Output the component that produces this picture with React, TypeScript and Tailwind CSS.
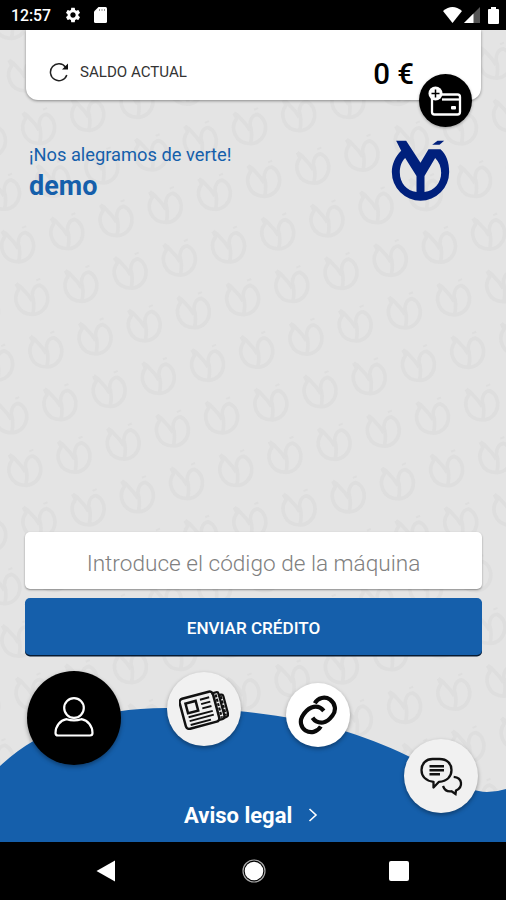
import type { ReactNode } from "react"
import { MdSettings } from "react-icons/md"

const LOGO_RING =
  "M15 2H45L88 68L112 28H148C165 42 174 68 174 96A86 86 0 0 1 2 96C2 72 12 50 30 32L15 2ZM42 54C30 66 26 82 26 98C26 128 46 152 76 156V108ZM132 54L100 108V156C130 152 150 128 150 98C150 82 144 66 132 54Z"
const LOGO_ACCENT = "M123 14L139 2H159L145 14Z"

function Logo({ className }: { className?: string }) {
  return (
    <svg viewBox="0 0 176 183" className={className} fill="currentColor" aria-hidden="true">
      <path d={LOGO_RING} fillRule="evenodd" />
      <path d={LOGO_ACCENT} />
    </svg>
  )
}

// slanted grid of faint logos behind the whole screen
function Watermark() {
  const marks: { x: number; y: number }[] = []
  for (let i = -6; i < 14; i++) {
    for (let j = -9; j < 13; j++) {
      const x = 45.7 + i * 49.2 + j * 14.1
      const y = 321.7 - i * 13.1 + j * 52.6
      if (x > -30 && x < 536 && y > -30 && y < 830) marks.push({ x, y })
    }
  }

  return (
    <svg viewBox="0 0 506 812" className="absolute inset-0 h-[812px] w-[506px]" aria-hidden="true">
      <g fill="none" stroke="#dedede" strokeWidth="11" strokeLinejoin="round">
        {marks.map(({ x, y }) => (
          <g key={`${x}-${y}`} transform={`translate(${x} ${y}) scale(0.333)`}>
            <path d="M-46 -46L-38 -30C-58 -4 -46 46 4 46C56 42 62 -26 24 -42C8 -40 2 -24 2 -10C8 6 8 22 4 44" />
            <path d="M-46 -46L-34 -38L-10 -12L2 6" />
            <path d="M14 -56L26 -61" strokeWidth="6" />
          </g>
        ))}
      </g>
    </svg>
  )
}

function StatusBar() {
  return (
    <div className="flex h-[30px] items-center justify-between bg-black pl-[11px] pr-[7px] text-white">
      <div className="flex items-center">
        <span className="w-[53px] pt-[1px] text-[15.800px] font-medium leading-none">12:57</span>
        <MdSettings className="size-[18px]" />
        <svg viewBox="0 0 13 16" className="ml-[12px] h-[16px] w-[13px]">
          <path d="M4.5 0H11.5Q13 0 13 1.5V14.5Q13 16 11.5 16H1.5Q0 16 0 14.5V4.5Z" fill="white" />
          <path d="M5.5 2V4M8 2V4M10.5 2V4" stroke="#999" strokeWidth="1" />
        </svg>
      </div>
      <div className="flex items-center">
        <svg viewBox="0 0 19 16" className="h-[16px] w-[19px]">
          <path d="M0 4Q9.500-4 19 4L9.500 16Z" fill="white" />
        </svg>
        <svg viewBox="0 0 16 16" className="ml-[2px] h-[16px] w-[16px]">
          <path d="M16 0V16H0Z" fill="#555" />
          <path d="M9.500 6.500V16H0Z" fill="white" />
        </svg>
        <svg viewBox="0 0 11 17" className="ml-[8px] h-[17px] w-[11px]">
          <path d="M3 0H8V2H10Q11 2 11 3V16Q11 17 10 17H1Q0 17 0 16V3Q0 2 1 2H3Z" fill="white" />
        </svg>
      </div>
    </div>
  )
}

function BalanceCard() {
  return (
    <section className="relative ml-[26px] mr-[25px] flex h-[70px] items-start rounded-b-[12px] bg-white pl-[22px] pt-[31px] shadow-[0_1px_3px_rgba(0,0,0,0.4)]">
      <svg viewBox="0 0 20 20" className="ml-[1px] mt-[1px] size-[20px]" fill="none" stroke="#222" strokeWidth="1.5">
        <path d="M17.800 13A8.400 8.400 0 1 1 16.600 5.200" />
        <path d="M19 1.500V7.500H13Z" fill="#111" stroke="none" />
      </svg>
      <span className="ml-[11px] mt-[1px] text-[15.100px] leading-[20px] text-[#333]">SALDO ACTUAL</span>
      <span className="ml-auto mr-[67px] text-[29.500px] font-medium leading-[26px] text-black">0 €</span>
      <button
        type="button"
        aria-label="Recargar"
        className="absolute right-[9px] top-[44px] flex size-[53px] items-center justify-center rounded-full bg-black shadow-[0_1px_3px_rgba(0,0,0,0.3)]"
      >
        <svg viewBox="0 0 36 30" className="mr-[2px] h-[30px] w-[36px]" fill="none">
          <path d="M14 8.500H30.500Q33 8.500 33 11V26Q33 28.500 30.500 28.500H7.500Q5 28.500 5 26V13" stroke="white" strokeWidth="2.300" />
          <path d="M15 13.500H33" stroke="white" strokeWidth="2.300" />
          <rect x="24" y="20" width="5" height="3.500" rx="1" fill="white" />
          <circle cx="8.500" cy="7.500" r="7" fill="white" />
          <path d="M8.500 3.500V11.500M4.500 7.500H12.500" stroke="black" strokeWidth="1.500" />
        </svg>
      </button>
    </section>
  )
}

function Bubble({ label, className, children }: { label: string; className: string; children: ReactNode }) {
  return (
    <button
      type="button"
      aria-label={label}
      className={`flex shrink-0 items-center justify-center rounded-full shadow-[0_2px_4px_rgba(0,0,0,0.35)] ${className}`}
    >
      {children}
    </button>
  )
}

function UserIcon() {
  return (
    <svg viewBox="0 0 40 40" className="mt-[-3px] size-[40px]" fill="none" stroke="white" strokeWidth="2.200">
      <circle cx="20" cy="11" r="9.800" />
      <path d="M12.500 22.200Q20 24.500 27.500 22.200C34 23.500 38.500 29 38.500 36Q38.500 38.500 36 38.500H4Q1.500 38.500 1.500 36C1.500 29 6 23.500 12.500 22.200Z" />
    </svg>
  )
}

function NewsIcon() {
  return (
    <svg viewBox="0 0 50 42" className="h-[42px] w-[50px]" fill="none" stroke="#111">
      <g transform="rotate(-15 25 21)">
        <rect x="3" y="5.500" width="34.500" height="31" rx="3.500" strokeWidth="2.500" />
        <path d="M36 8H41Q43 8 43 10V32.500Q43 35.500 40 35.500H36" strokeWidth="2.200" />
        <path d="M42 11.500H45Q47 11.500 47 13.500V31.500Q47 34.500 44 34.500H41" strokeWidth="2.200" />
        <path d="M40 10V34M44.500 13V33" strokeWidth="2.200" strokeDasharray="3 1.500" />
        <rect x="8.500" y="11" width="10.500" height="10" strokeWidth="2.500" />
        <path d="M23.500 11H33M23.500 15.500H33M23.500 20H33M8 25H33M8 29H33M8 33H29" strokeWidth="1.900" />
      </g>
    </svg>
  )
}

function LinkIcon() {
  return (
    <svg viewBox="0 0 40 40" className="size-[40px]" fill="none" stroke="#0a0a0a" strokeWidth="4.200">
      <path d="M16.800 8.200C20 2.500 27 1.200 32 4.500C37.500 8.500 38.500 15.500 34.500 20.500C31.500 24.500 29 27 25 27.500C20.500 28 17 26.500 14.500 22.800" />
      <path d="M25.800 15.800C22.500 12 18 10.800 13.500 12.500C10 14 6.500 17.500 4.200 21.500C1.500 26.500 3 32.500 7.500 35.500C12.500 38.500 19 37.500 22.800 31.500" />
    </svg>
  )
}

function ChatIcon() {
  return (
    <svg viewBox="0 0 44 40" className="h-[40px] w-[44px]" fill="none" stroke="#111" strokeWidth="2.300">
      <path d="M13.500 3H20.500C28 3 32.500 7.500 32.500 14C32.500 20.500 28 25.500 20 25.800L14.500 31.500V25.800C7 25 2.500 20.500 2.500 14C2.500 7.500 7 3 13.500 3Z" strokeLinejoin="round" />
      <path d="M10.500 10.200H25M10.500 14.200H25M10.500 18.200H21" strokeWidth="2.400" />
      <path d="M34.700 20.800C43.500 21.500 44.500 31 37 34.500L36.500 38L32.500 35.300C28 36 25.500 34 24 30" />
    </svg>
  )
}

function BottomMenu() {
  return (
    <footer className="relative h-[187px]">
      <svg viewBox="0 0 506 186" className="absolute inset-x-0 bottom-0 h-[186px] w-[506px]" aria-hidden="true">
        <path
          d="M0 110C40 73 95 52 166 52C270 52 345 69 408 100C443 117 462 135 487 136Q497 136 506 133V186H0Z"
          fill="#155fab"
        />
      </svg>
      <nav className="relative flex h-[147px] items-start pl-[27px]">
        <Bubble label="Perfil" className="mt-[16px] size-[94px] bg-black">
          <UserIcon />
        </Bubble>
        <Bubble label="Noticias" className="ml-[46px] mt-[17px] size-[74px] bg-[#f1f1f1]">
          <NewsIcon />
        </Bubble>
        <Bubble label="Enlaces" className="ml-[45px] mt-[28px] size-[64px] bg-white">
          <LinkIcon />
        </Bubble>
        <Bubble label="Mensajes" className="ml-[54px] mt-[84px] size-[74px] bg-[#f1f1f1]">
          <ChatIcon />
        </Bubble>
      </nav>
      <a href="#" className="relative ml-[184px] flex w-fit items-center text-white">
        <span className="text-[22px] font-bold leading-[28px]">Aviso legal</span>
        <svg viewBox="0 0 10 14" className="ml-[16px] mt-[-3px] h-[14px] w-[10px]" fill="none" stroke="white" strokeWidth="1.600">
          <path d="M1.500 1L8 7L1.500 13" />
        </svg>
      </a>
    </footer>
  )
}

function NavigationBar() {
  return (
    <div className="flex h-[58px] items-center bg-black pl-[96px]">
      <svg viewBox="0 0 19 22" className="h-[22px] w-[19px]">
        <path d="M19 0.500V21.500L0.500 11Z" fill="white" />
      </svg>
      <svg viewBox="0 0 24 24" className="ml-[127px] size-[24px]">
        <circle cx="12" cy="12" r="11" fill="none" stroke="#aaa" strokeWidth="1.200" />
        <circle cx="12" cy="12" r="9.300" fill="white" />
      </svg>
      <div className="ml-[123px] size-[20px] rounded-[2px] bg-white" />
    </div>
  )
}

export default function App() {
  return (
    <div className="flex h-[900px] w-[506px] flex-col overflow-hidden bg-[#e4e4e4] font-['Roboto',sans-serif]">
      <StatusBar />
      <main className="relative flex h-[812px] flex-col overflow-hidden">
        <Watermark />
        <BalanceCard />

        <div className="relative flex justify-between pl-[29px] pr-[56px] pt-[40px]">
          <div className="mt-[4px] text-[#155fab]">
            <p className="text-[18.300px] leading-[22px]">¡Nos alegramos de verte!</p>
            <p className="mt-[4px] text-[27px] font-bold leading-[32px]">demo</p>
          </div>
          <Logo className="h-[61px] w-[59px] text-[#00207c]" />
        </div>

        <form className="relative ml-[25px] mr-[24px] mt-auto flex flex-col gap-[9px]">
          <input
            type="text"
            placeholder="Introduce el código de la máquina"
            className="h-[57px] rounded-[5px] bg-white pt-[5px] text-center text-[22.600px] font-light shadow-[0_1px_2px_rgba(0,0,0,0.4)] outline-none placeholder:text-[#808080]"
          />
          <button
            type="button"
            className="h-[57px] rounded-[5px] bg-[#155fab] pt-[4px] text-[17.100px] font-medium text-white shadow-[0_1.500px_0_#061b33]"
          >
            ENVIAR CRÉDITO
          </button>
        </form>

        <BottomMenu />
      </main>
      <NavigationBar />
    </div>
  )
}
